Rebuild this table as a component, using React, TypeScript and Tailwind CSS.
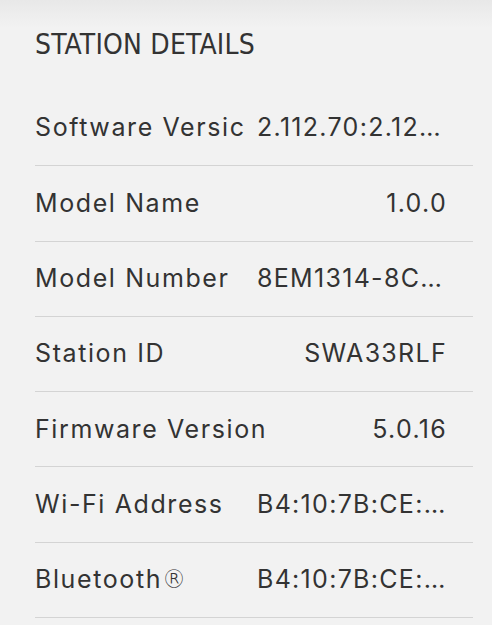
const rows: { label: string; value: string; cut?: boolean }[] = [
  { label: "Software Versic", value: "2.112.70:2.12…", cut: true },
  { label: "Model Name", value: "1.0.0" },
  { label: "Model Number", value: "8EM1314-8C…", cut: true },
  { label: "Station ID", value: "SWA33RLF" },
  { label: "Firmware Version", value: "5.0.16" },
  { label: "Wi-Fi Address", value: "B4:10:7B:CE:…", cut: true },
  { label: "Bluetooth", value: "B4:10:7B:CE:…", cut: true },
];

export default function App() {
  return (
    <div className="min-h-[625px] w-[492px] overflow-hidden bg-[linear-gradient(to_bottom,#e8e8e8_0px,#f2f2f2_28px,#f2f2f2_100%)] text-[#333333] font-['Inter',sans-serif]">
      <div className="pl-[35px] pr-[19px]">
        <h2 className="h-[91px] pt-[27px] text-[28px] leading-[35px] font-['Liberation_Sans_Narrow','DejaVu_Sans_Condensed',Roboto,sans-serif] tracking-[0.2px]">
          STATION DETAILS
        </h2>
        <ul>
          {rows.map((r) => (
            <li
              key={r.label}
              className="flex h-[75.3px] items-center border-b-[1.5px] border-[#d4d4d4] pr-[26px] text-[25px] tracking-[1.3px]"
            >
              <span className="w-[208px] shrink-0 whitespace-nowrap tracking-[1.6px]">
                {r.label}
                {r.label === "Bluetooth" && (
                  <span className="font-['DejaVu_Sans',sans-serif] font-light text-[24px] tracking-normal">
                    ®
                  </span>
                )}
              </span>
              <span
                className={
                  r.cut
                    ? "ml-[14px] min-w-0 flex-1 whitespace-nowrap text-left"
                    : "ml-[14px] min-w-0 flex-1 whitespace-nowrap text-right"
                }
              >
                {r.value}
              </span>
            </li>
          ))}
        </ul>
      </div>
    </div>
  );
}
